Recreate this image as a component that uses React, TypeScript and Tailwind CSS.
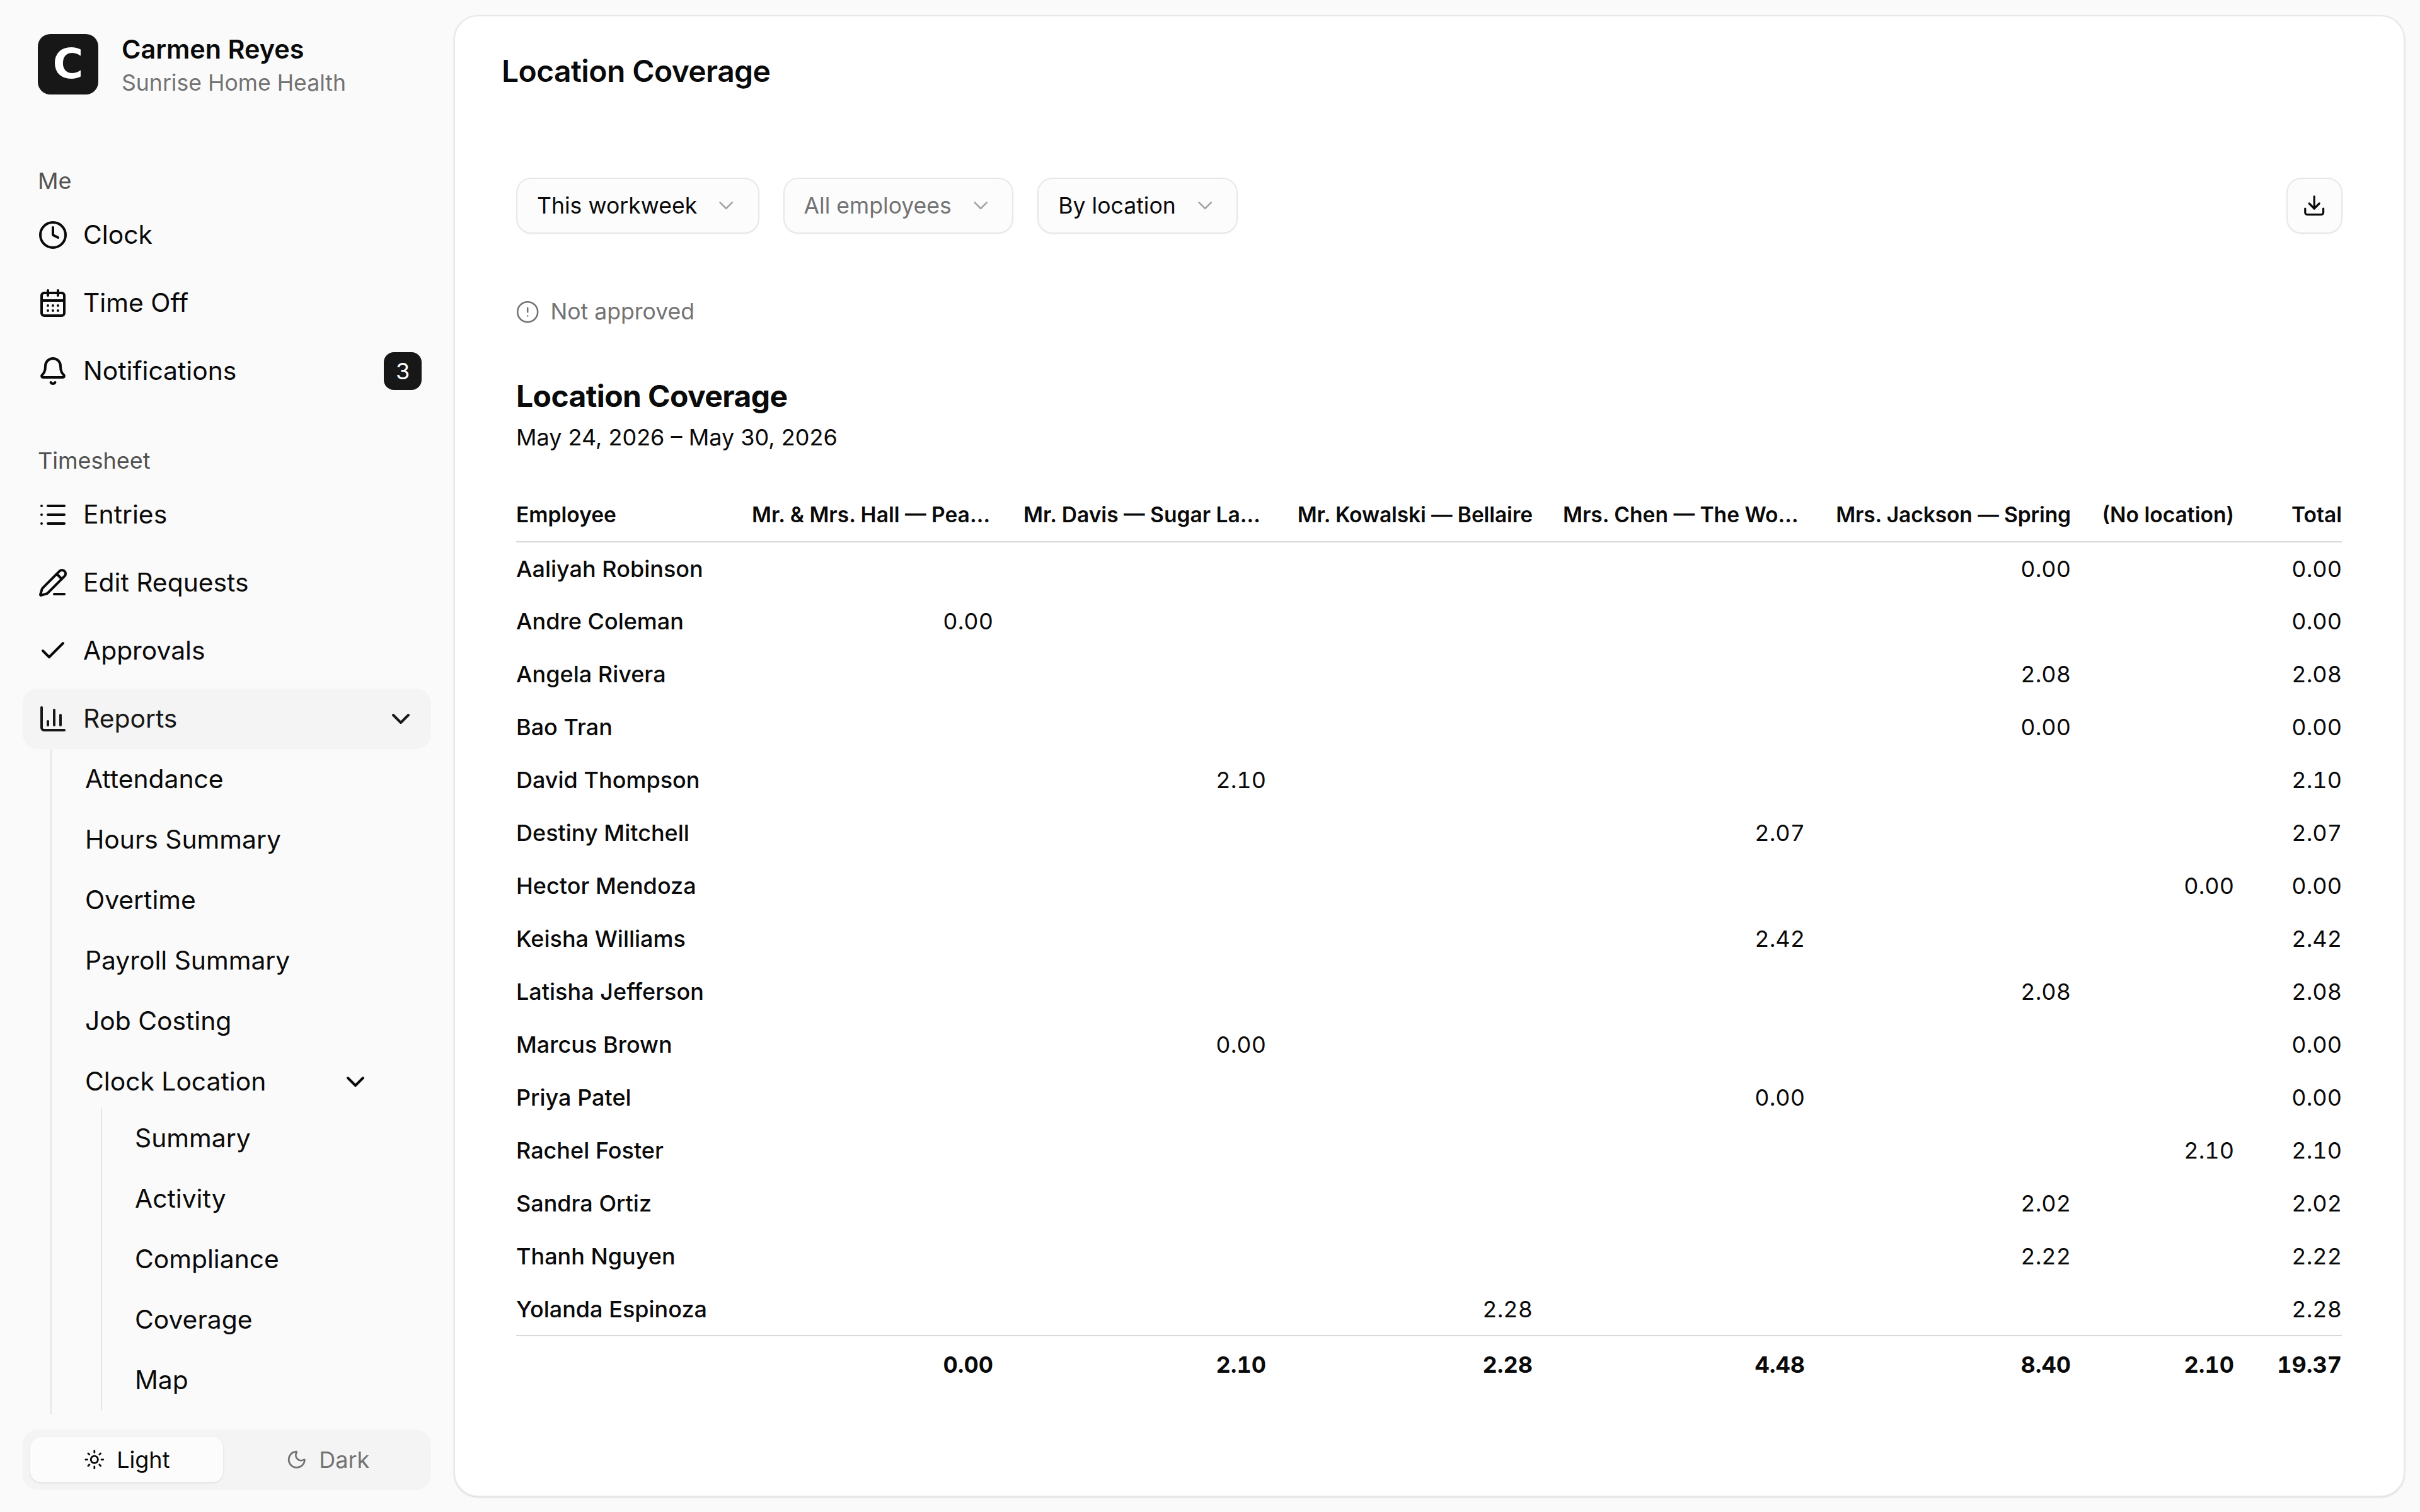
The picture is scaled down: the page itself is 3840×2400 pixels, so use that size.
import React from 'react';
import {
    Bell,
    CalendarDays,
    ChartColumn,
    Check,
    ChevronDown,
    CircleAlert,
    Clock,
    Download,
    List,
    Moon,
    PencilLine,
    Sun,
} from 'lucide-react';

// tight: header text that just fits its column in the reference
const columns = [
    { name: 'Mr. & Mrs. Hall — Pearland', tight: false },
    { name: 'Mr. Davis — Sugar Land', tight: false },
    { name: 'Mr. Kowalski — Bellaire', tight: true },
    { name: 'Mrs. Chen — The Woodlands', tight: false },
    { name: 'Mrs. Jackson — Spring', tight: true },
    { name: '(No location)', tight: false },
];

// each row: name, column index of the hours, hours (total is the same value)
const rows: [string, number, string][] = [
    ['Aaliyah Robinson', 4, '0.00'],
    ['Andre Coleman', 0, '0.00'],
    ['Angela Rivera', 4, '2.08'],
    ['Bao Tran', 4, '0.00'],
    ['David Thompson', 1, '2.10'],
    ['Destiny Mitchell', 3, '2.07'],
    ['Hector Mendoza', 5, '0.00'],
    ['Keisha Williams', 3, '2.42'],
    ['Latisha Jefferson', 4, '2.08'],
    ['Marcus Brown', 1, '0.00'],
    ['Priya Patel', 3, '0.00'],
    ['Rachel Foster', 5, '2.10'],
    ['Sandra Ortiz', 4, '2.02'],
    ['Thanh Nguyen', 4, '2.22'],
    ['Yolanda Espinoza', 2, '2.28'],
];

const totals = ['0.00', '2.10', '2.28', '4.48', '8.40', '2.10', '19.37'];

const NavRow = ({ icon: Icon, label, badge, open }: { icon: React.ElementType; label: string; badge?: string; open?: boolean }) => (
    <div className={`mx-[36px] flex h-[96px] items-center gap-[24px] rounded-[24px] px-[24px] text-[40.8px] ${open ? 'bg-[#f4f4f4] text-[#171717]' : 'text-[#0a0a0a]'}`}>
        <Icon size={48} className="shrink-0" />
        <span>{label}</span>
        {badge && (
            <span className="-mr-[9px] ml-auto flex size-[60px] items-center justify-center rounded-[16px] bg-[#171717] text-[36px] text-white">
                {badge}
            </span>
        )}
        {open && <ChevronDown size={48} className="ml-auto" />}
    </div>
);

const Filter = ({ label, muted }: { label: string; muted?: boolean }) => (
    <button className={`flex h-[89px] items-center gap-[27px] rounded-[24px] border-[2.4px] border-[#e8e8e8] bg-[#fcfcfc] pl-[31px] pr-[31px] text-[35.6px] shadow-xs ${muted ? 'text-[#737373]' : 'text-[#0a0a0a]'}`}>
        {label}
        <ChevronDown size={38.4} strokeWidth={1.6} className="text-[#a3a3a3]" />
    </button>
);

export default function App() {
    return (
        <div className="flex h-[2400px] w-[3840px] overflow-hidden bg-[#fafafa] [font-family:Inter,sans-serif]">
            <aside className="flex w-[720px] shrink-0 flex-col">
                <div className="flex items-start gap-[37px] pl-[60px] pt-[52px]">
                    <div className="mt-[2px] flex size-[96px] items-center justify-center rounded-[20px] bg-[#171717] text-[66px] font-bold leading-none text-white [font-family:'DejaVu_Sans',sans-serif]">
                        C
                    </div>
                    <div className="flex flex-col">
                        <span className="text-[41.4px] font-semibold leading-[53px] text-[#0a0a0a]">Carmen Reyes</span>
                        <span className="text-[35.6px] leading-[53px] text-[#737373]">Sunrise Home Health</span>
                    </div>
                </div>

                <div className="mb-[14px] ml-[60px] mt-[105px] h-[48px] text-[36px] leading-[48px] text-[#525252]">Me</div>
                <div className="flex flex-col gap-[12px]">
                    <NavRow icon={Clock} label="Clock" />
                    <NavRow icon={CalendarDays} label="Time Off" />
                    <NavRow icon={Bell} label="Notifications" badge="3" />
                </div>

                <div className="mb-[14px] ml-[60px] mt-[70px] h-[48px] text-[36px] leading-[48px] text-[#525252]">Timesheet</div>
                <div className="flex flex-col gap-[12px]">
                    <NavRow icon={List} label="Entries" />
                    <NavRow icon={PencilLine} label="Edit Requests" />
                    <NavRow icon={Check} label="Approvals" />
                    <NavRow icon={ChartColumn} label="Reports" open />
                </div>

                <div className="ml-[80px] flex w-[560px] flex-col border-l-[2.4px] border-[#e5e5e5] pb-[6px] text-[40.8px] text-[#0a0a0a]">
                    {['Attendance', 'Hours Summary', 'Overtime', 'Payroll Summary', 'Job Costing'].map((item) => (
                        <div key={item} className="flex h-[96px] items-center pl-[53px]">
                            {item}
                        </div>
                    ))}
                    <div className="flex h-[96px] items-center justify-between pl-[53px] pr-[52px]">
                        Clock Location
                        <ChevronDown size={48} />
                    </div>
                    <div className="-mt-[6px] ml-[78px] flex flex-col border-l-[2.4px] border-[#e5e5e5]">
                        {['Summary', 'Activity', 'Compliance', 'Coverage', 'Map'].map((item) => (
                            <div key={item} className="flex h-[96px] items-center pl-[52px]">
                                {item}
                            </div>
                        ))}
                    </div>
                </div>

                <div className="mx-[36px] mt-[24px] flex h-[96px] items-center rounded-[24px] bg-[#f4f4f4] p-[12px] text-[36px]">
                    <div className="flex h-[72px] w-[306px] items-center justify-center gap-[19px] rounded-[17px] bg-[#fcfcfc] text-[#0a0a0a] shadow-sm">
                        <Sun size={33.6} />
                        Light
                    </div>
                    <div className="flex h-[72px] flex-1 items-center justify-center gap-[19px] pl-[14px] text-[#737373]">
                        <Moon size={33.6} />
                        Dark
                    </div>
                </div>
            </aside>

            <main className="mb-[24px] mr-[24px] mt-[24px] flex-1 rounded-[38.4px] border-[2.4px] border-[#e8e8e8] bg-white shadow-sm">
                <h1 className="ml-[74px] mt-[55px] text-[48px] font-semibold leading-[64px] tracking-[-0.6px] text-[#0a0a0a]">Location Coverage</h1>

                <div className="mx-[97px] mt-[137px]">
                    <div className="flex items-center gap-[38px]">
                        <Filter label="This workweek" />
                        <Filter label="All employees" muted />
                        <Filter label="By location" />
                        <button className="ml-auto flex size-[89px] items-center justify-center rounded-[24px] border-[2.4px] border-[#e8e8e8] bg-[#fcfcfc] text-[#0a0a0a] shadow-xs">
                            <Download size={38.4} />
                        </button>
                    </div>

                    <div className="mt-[100px] flex h-[48px] items-center gap-[17px] text-[35.6px] text-[#737373]">
                        <CircleAlert size={38.4} strokeWidth={1.6} className="-ml-[1px]" />
                        Not approved
                    </div>

                    <h2 className="mt-[78px] text-[48px] font-bold leading-[64px] tracking-[-0.6px] text-[#0a0a0a]">Location Coverage</h2>
                    <p className="mt-[9px] text-[36px] leading-[48px] text-[#0a0a0a]">May 24, 2026 – May 30, 2026</p>

                    <table className="mt-[58px] w-[2897px] table-fixed border-collapse text-[36px] text-[#0a0a0a]">
                        <colgroup>
                            <col className="w-[326px]" />
                            <col className="w-[431px]" />
                            <col className="w-[433px]" />
                            <col className="w-[423px]" />
                            <col className="w-[432px]" />
                            <col className="w-[422px]" />
                            <col className="w-[259px]" />
                            <col className="w-[171px]" />
                        </colgroup>
                        <thead className="text-[33.6px]">
                            <tr className="h-[84px] border-b-[2.4px] border-[#d9d9d9]">
                                <th className="text-left font-semibold">Employee</th>
                                {columns.map((c) => (
                                    <th key={c.name} className={`truncate pl-[48px] text-right font-semibold ${c.tight ? 'tracking-[-0.12px]' : ''}`}>
                                        {c.name}
                                    </th>
                                ))}
                                <th className="pl-[48px] text-right font-semibold">Total</th>
                            </tr>
                        </thead>
                        <tbody className="tabular-nums">
                            {rows.map(([name, col, hours]) => (
                                <tr key={name} className="h-[84px]">
                                    <td className="font-medium">{name}</td>
                                    {columns.map((c, i) => (
                                        <td key={c.name} className="pl-[48px] text-right">
                                            {i === col ? hours : ''}
                                        </td>
                                    ))}
                                    <td className="pl-[48px] text-right">{hours}</td>
                                </tr>
                            ))}
                        </tbody>
                        <tfoot>
                            <tr className="h-[90px] border-t-[2.4px] border-[#d9d9d9] font-bold tabular-nums">
                                <td />
                                {totals.map((t, i) => (
                                    <td key={i} className="pl-[48px] text-right">
                                        {t}
                                    </td>
                                ))}
                            </tr>
                        </tfoot>
                    </table>
                </div>
            </main>
        </div>
    );
}
